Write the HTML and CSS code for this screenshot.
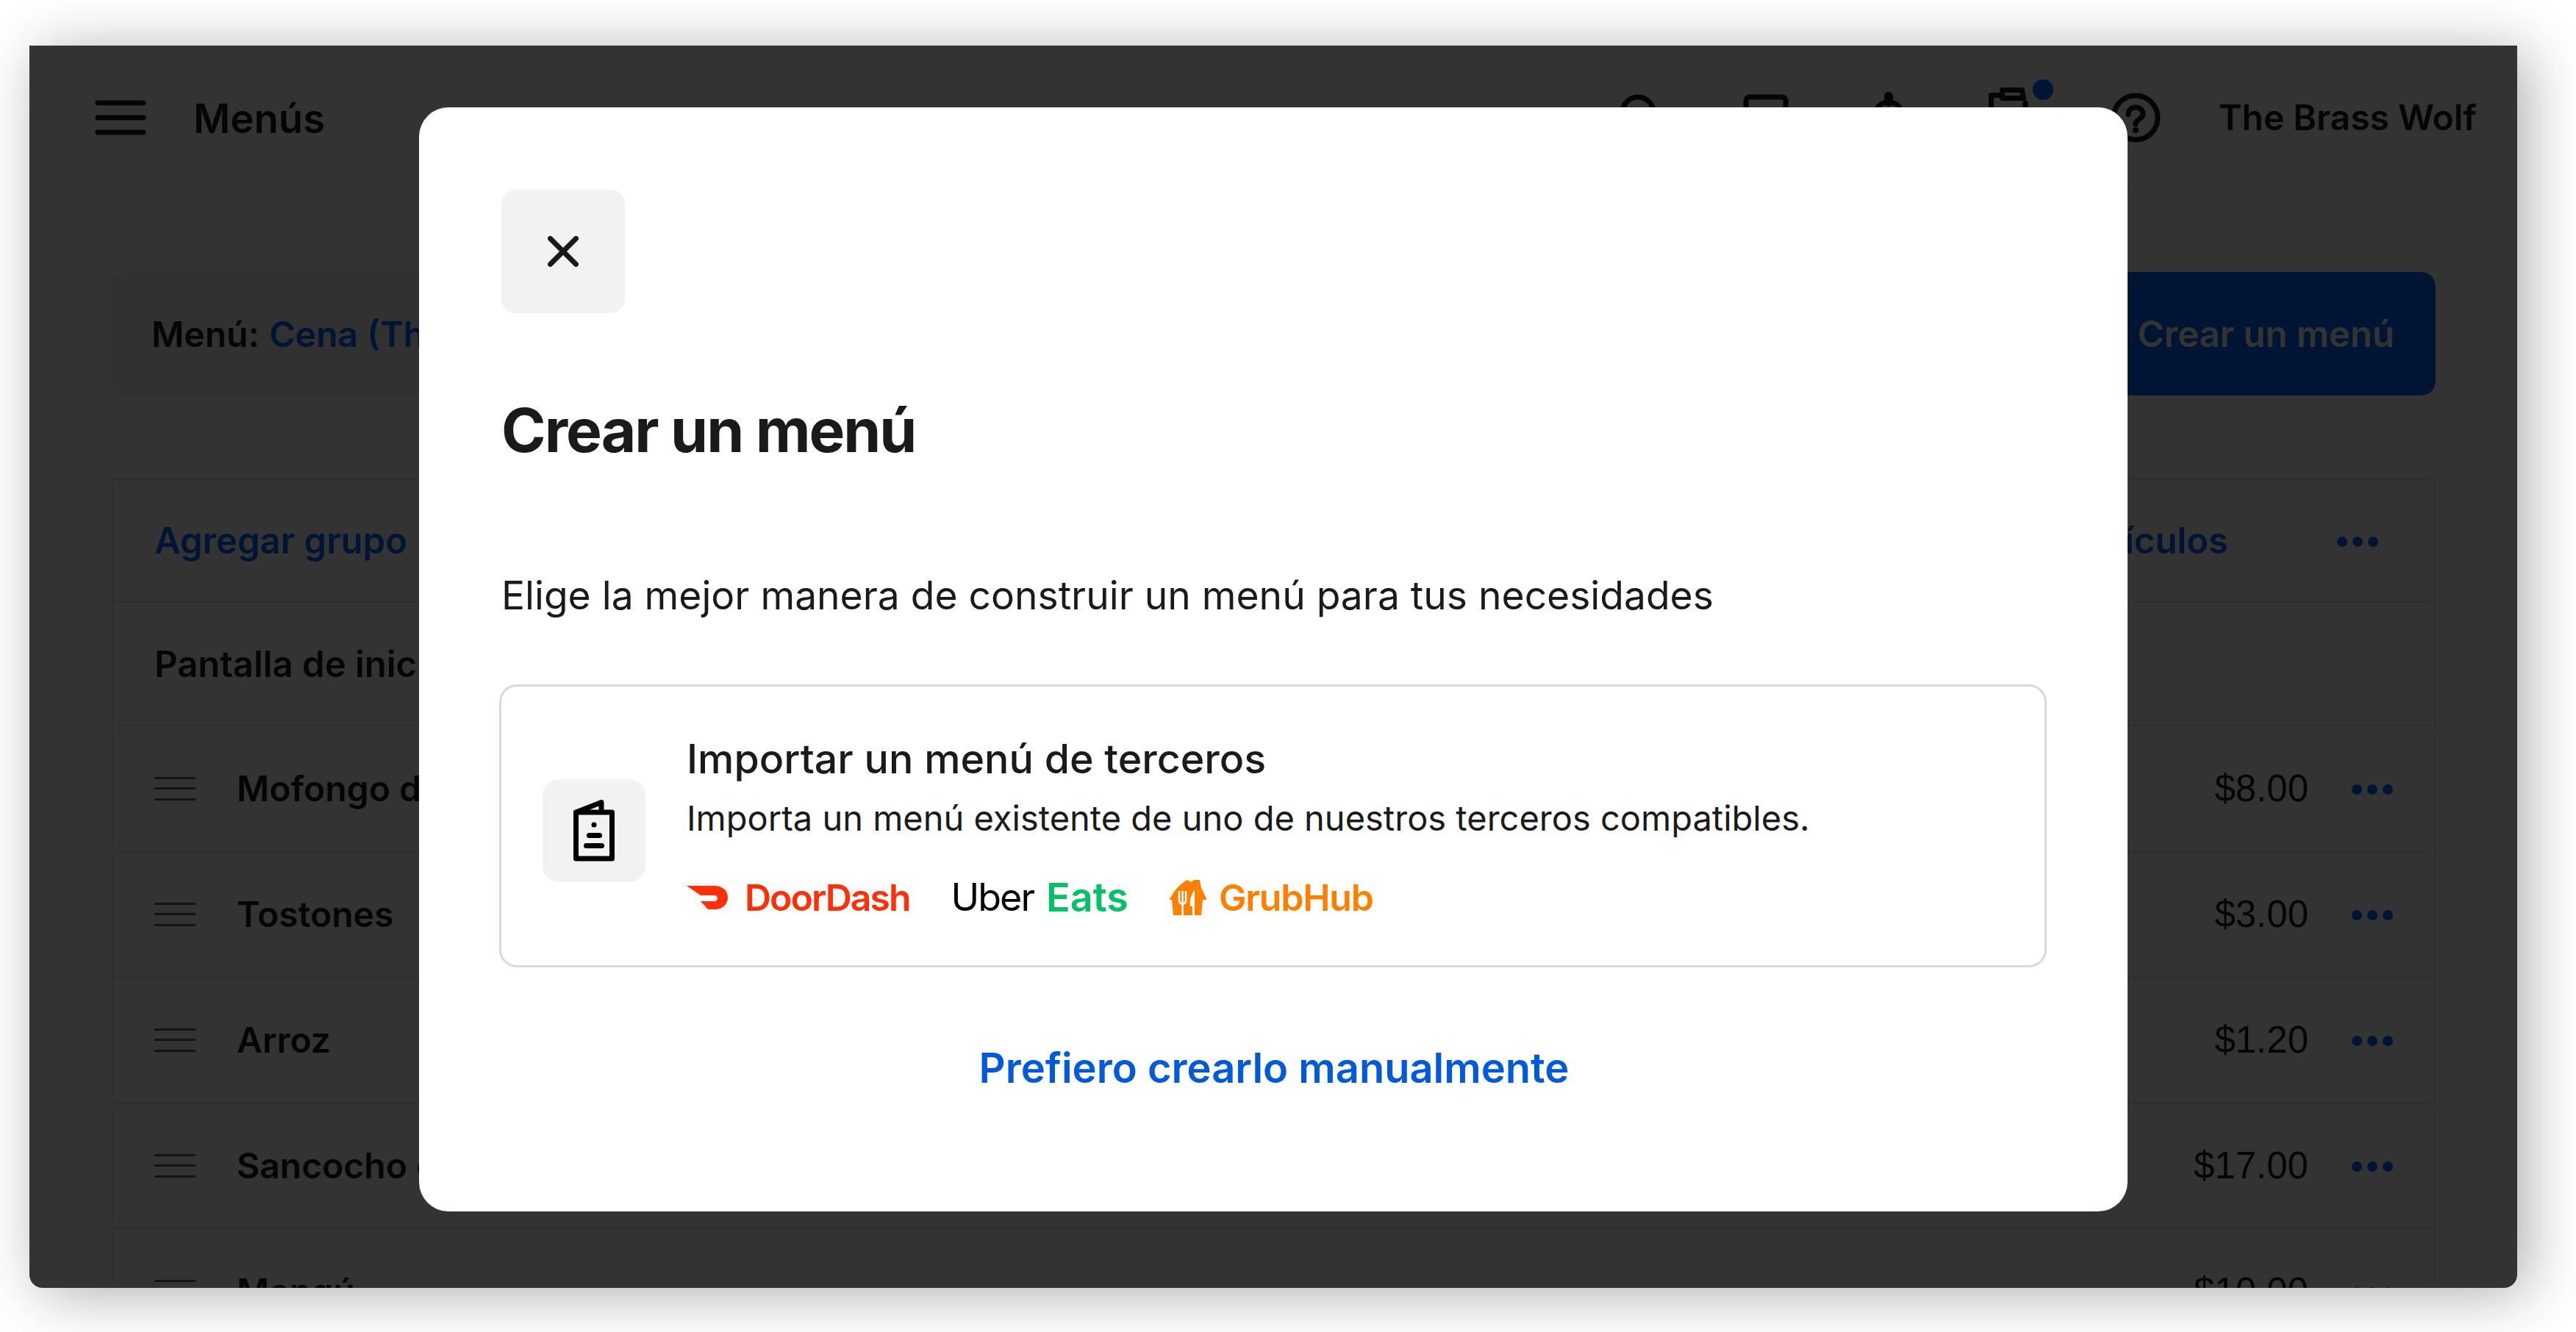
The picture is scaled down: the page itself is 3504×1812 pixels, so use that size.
FILE: index.html
```html
<!DOCTYPE html>
<html lang="es">
<head>
  <meta charset="UTF-8">
  <title>Menús</title>
  <link rel="stylesheet" href="styles.css">
</head>
<body>
  <div class="frame">
    <header class="topbar">
      <svg class="burger" viewBox="0 0 70 48"><path d="M4 4h62M4 24h62M4 44h62"/></svg>
      <div class="page-title">Menús</div>
      <div class="top-icons">
        <svg class="ico" width="54" height="64" viewBox="0 0 54 64"><circle cx="25" cy="25" r="21"/><path d="M41 41l10 14"/></svg>
        <svg class="ico" width="62" height="64" viewBox="0 0 62 64"><rect x="4" y="4" width="54" height="56" rx="5"/></svg>
        <svg class="ico bell" width="44" height="70" viewBox="0 0 44 70"><path class="nub" d="M22 6v8"/><path d="M22 14C10 14 4 22 4 34v18h36V34C40 22 34 14 22 14z"/></svg>
        <div class="doc-ico">
          <svg class="ico" width="56" height="82" viewBox="0 0 56 82"><path d="M18.500 3.500h27l2 11h-29zM18.500 10.500h-15V78H50V21"/></svg>
          <span class="dot"></span>
        </div>
        <svg class="ico help" width="68" height="70" viewBox="0 0 68 70"><circle cx="34" cy="35" r="30"/><path d="M24 31c0-7 5-10 10-10s10 3 10 9c0 7-10 7-10 14"/><circle class="fill" cx="34" cy="52" r="4"/></svg>
      </div>
      <div class="account">The Brass Wolf</div>
    </header>

    <main class="content">
      <div class="toolbar">
        <div class="menu-pick"><strong>Menú:</strong> <a>Cena (The Brass Wolf)</a></div>
        <div class="primary-btn">Crear un menú</div>
      </div>

      <div class="table">
        <div class="row head">
          <a>Agregar grupo</a>
          <a class="add-items">Agregar artículos</a>
          <span class="more head-more"><i></i><i></i><i></i></span>
        </div>
        <div class="row group"><strong>Pantalla de inicio</strong></div>
        <div class="row item">
          <span class="handle"></span><strong>Mofongo de pollo</strong>
          <span class="price">$8.00</span><span class="more"><i></i><i></i><i></i></span>
        </div>
        <div class="row item">
          <span class="handle"></span><strong>Tostones</strong>
          <span class="price">$3.00</span><span class="more"><i></i><i></i><i></i></span>
        </div>
        <div class="row item">
          <span class="handle"></span><strong>Arroz</strong>
          <span class="price">$1.20</span><span class="more"><i></i><i></i><i></i></span>
        </div>
        <div class="row item">
          <span class="handle"></span><strong>Sancocho de gallina</strong>
          <span class="price">$17.00</span><span class="more"><i></i><i></i><i></i></span>
        </div>
        <div class="row item">
          <span class="handle"></span><strong>Mangú</strong>
          <span class="price">$10.00</span><span class="more"><i></i><i></i><i></i></span>
        </div>
      </div>
    </main>

    <div class="overlay"></div>

    <div class="modal">
      <button class="close-btn">
        <svg width="42" height="42" viewBox="0 0 42 42"><path d="M3.500 3.500l35 35M38.500 3.500l-35 35"/></svg>
      </button>
      <h1>Crear un menú</h1>
      <p class="lead">Elige la mejor manera de construir un menú para tus necesidades</p>

      <div class="card">
        <div class="card-icon">
          <svg width="56" height="84" viewBox="0 0 56 84">
            <path class="line" d="M3.500 80V17h49v63zM3.500 17L38 3.500V17"/>
            <circle cx="28" cy="34" r="3.500"/>
            <path class="line" d="M21.500 48.500h14M17.500 62.500h21"/>
          </svg>
        </div>
        <div class="card-text">
          <div class="card-title">Importar un menú de terceros</div>
          <div class="card-sub">Importa un menú existente de uno de nuestros terceros compatibles.</div>
          <div class="logos">
            <div class="logo doordash">
              <svg width="56" height="32" viewBox="0 0 56 32"><path d="M0 0H38C49 0 56 7 56 15.500C56 25 49 32 39 32H29L19 21H38C40 21 42 19 42 17S40 13 38 13H19z"/></svg>
              <span>DoorDash</span>
            </div>
            <div class="logo uber"><span>Uber</span><b>Eats</b></div>
            <div class="logo grubhub">
              <svg width="50" height="50" viewBox="0 0 50 50">
                <path d="M0 27C6 16 14 6 24 1L29 4L33 1H41L43 12L50 26V28H45L43 49H5L3 28H0z"/>
                <path class="cut" d="M13 16v13q0 4 4.500 5q4.500-1 4.500-5V16M17.500 16v33"/>
                <path class="cut-fill" d="M34 15c-5 6-7 14-6 22h3v12h3z"/>
              </svg>
              <span>GrubHub</span>
            </div>
          </div>
        </div>
      </div>

      <a class="manual-link">Prefiero crearlo manualmente</a>
    </div>
  </div>
</body>
</html>
```

FILE: styles.css
```css
* {
  box-sizing: border-box;
}

html, body {
  margin: 0;
  height: 100%;
  overflow: hidden;
  background-color: #fff;
  font-family: Inter, "Noto Sans", sans-serif;
  color: #1a1a1a;
}

body {
  padding: 62px 80px 60px 40px;
}

.frame {
  position: relative;
  height: 1690px;
  overflow: hidden;
  background-color: #fff;
  border-radius: 0 0 18px 18px;
}

/* the shadow sits on the body so the frame's overflow does not cut it */
body::before {
  content: "";
  position: absolute;
  left: 40px;
  top: 62px;
  width: 3384px;
  height: 1690px;
  border-radius: 0 0 18px 18px;
  box-shadow: 14px 8px 80px rgba(0, 0, 0, 0.32);
}

/* page behind the dialog */
.topbar {
  display: flex;
  align-items: center;
  height: 197px;
  padding: 0 55px 0 89px;
  border-bottom: 2px solid #ececec;
}

.burger {
  width: 70px;
  height: 48px;
  fill: none;
  stroke: #1a1a1a;
  stroke-width: 7;
  stroke-linecap: round;
}

.page-title {
  margin: 2px 0 0 64px;
  font-size: 54.500px;
  font-weight: 600;
}

.top-icons {
  display: flex;
  align-items: center;
  gap: 114px;
  margin-left: auto;
  margin-right: 79px;
}

.ico {
  display: block;
  fill: none;
  stroke: #1a1a1a;
  stroke-width: 7;
  stroke-linecap: round;
  stroke-linejoin: round;
}

.ico .nub {
  stroke-width: 12;
}

.ico .fill {
  fill: #1a1a1a;
  stroke: none;
}

.doc-ico {
  position: relative;
  margin-right: -4px;
}

.dot {
  position: absolute;
  top: -11px;
  right: -32px;
  width: 28px;
  height: 28px;
  border-radius: 50%;
  background-color: #006aff;
}

.account {
  font-size: 48px;
  font-weight: 600;
}

.content {
  padding: 111px 111px 0 112px;
}

.toolbar {
  display: flex;
  justify-content: space-between;
  height: 168px;
  margin-bottom: 112px;
  background-color: #f2f2f2;
  border-radius: 16px;
}

.menu-pick {
  align-self: center;
  padding-left: 54px;
  font-size: 48px;
}

.menu-pick a, .row a {
  color: #006aff;
  font-weight: 600;
}

.row a {
  font-size: 49px;
}

.menu-pick strong, .row strong {
  font-weight: 600;
}

.group strong {
  font-size: 49px;
}

.primary-btn {
  display: flex;
  align-items: center;
  padding: 0 56px;
  background-color: #006aff;
  border-radius: 20px;
  color: #fff;
  font-size: 49px;
  font-weight: 600;
}

.table {
  border: 2px solid #e5e5e5;
  border-bottom: 0;
  font-size: 48px;
}

.row {
  display: flex;
  align-items: center;
  height: 171px;
  padding: 0 56px;
  border-bottom: 2px solid #e5e5e5;
}

.row.head, .row.group {
  height: 168px;
}

.add-items {
  margin-left: auto;
}

.handle {
  width: 56px;
  height: 32px;
  margin-right: 56px;
  border-top: 3px solid #666;
  border-bottom: 3px solid #666;
  background: linear-gradient(#666, #666) center / 100% 3px no-repeat;
}

.price {
  margin-left: auto;
  font-family: "Liberation Sans", sans-serif;
  font-size: 51px;
}

.more {
  display: flex;
  gap: 7px;
  margin: 2px 0 0 59px;
}

.more i {
  width: 14px;
  height: 14px;
  border-radius: 50%;
  background-color: #006aff;
}

.head-more {
  margin: 4px 20px 0 148px;
}

.overlay {
  position: absolute;
  inset: 0;
  background-color: rgba(0, 0, 0, 0.8);
}

/* dialog */
.modal {
  position: absolute;
  left: 530px;
  top: 84px;
  width: 2324px;
  height: 1502px;
  padding: 112px 110px 0 112px;
  background-color: #fff;
  border-radius: 40px;
}

.close-btn {
  display: flex;
  align-items: center;
  justify-content: center;
  width: 168px;
  height: 168px;
  padding: 0;
  border: 0;
  border-radius: 20px;
  background-color: #f2f2f2;
}

.close-btn svg {
  fill: none;
  stroke: #1a1a1a;
  stroke-width: 7;
  stroke-linecap: round;
}

h1 {
  margin: 110px 0 0;
  font-size: 82px;
  line-height: 100px;
  font-weight: 700;
  letter-spacing: -2px;
}

.lead {
  margin: 139px 0 0;
  font-size: 53.350px;
  line-height: 70px;
}

.card {
  display: flex;
  align-items: flex-start;
  height: 385px;
  margin: 86px 0 0 -3px;
  padding: 0 54px 0 56px;
  border: 3px solid #d9d9d9;
  border-radius: 24px;
}

.card-icon {
  display: flex;
  align-items: center;
  justify-content: center;
  flex: none;
  width: 140px;
  height: 140px;
  margin-top: 126px;
  border-radius: 22px;
  background-color: #f2f2f2;
}

.card-icon svg {
  fill: #000;
}

.card-icon .line {
  fill: none;
  stroke: #000;
  stroke-width: 7;
  stroke-linecap: round;
  stroke-linejoin: round;
}

.card-text {
  margin: 63px 0 0 56px;
}

.card-title {
  font-size: 55.500px;
  line-height: 70px;
  font-weight: 500;
}

.card-sub {
  margin-top: 15px;
  font-size: 47px;
  line-height: 62px;
}

.logos {
  display: flex;
  align-items: center;
  gap: 56px;
  margin-top: 47px;
  font-size: 50px;
  line-height: 60px;
}

.logo {
  display: flex;
  align-items: center;
  font-weight: 600;
}

.doordash {
  gap: 23px;
  color: #ff3008;
  letter-spacing: -2px;
}

.doordash svg {
  fill: #ff3008;
}

.uber {
  gap: 17px;
  color: #000;
  font-size: 52px;
  font-weight: 400;
  letter-spacing: -2px;
}

.uber b {
  color: #06c167;
  font-size: 54px;
  font-weight: 600;
  letter-spacing: 0;
}

.grubhub {
  gap: 17px;
  color: #ff8000;
  letter-spacing: -1.200px;
}

.grubhub svg {
  fill: #ff8000;
}

.grubhub .cut {
  fill: none;
  stroke: #fff;
  stroke-width: 2.500;
}

.grubhub .cut-fill {
  fill: #fff;
}

.manual-link {
  display: block;
  margin-top: 102px;
  text-align: center;
  font-size: 56px;
  line-height: 70px;
  font-weight: 600;
  color: #005ad9;
}
```
